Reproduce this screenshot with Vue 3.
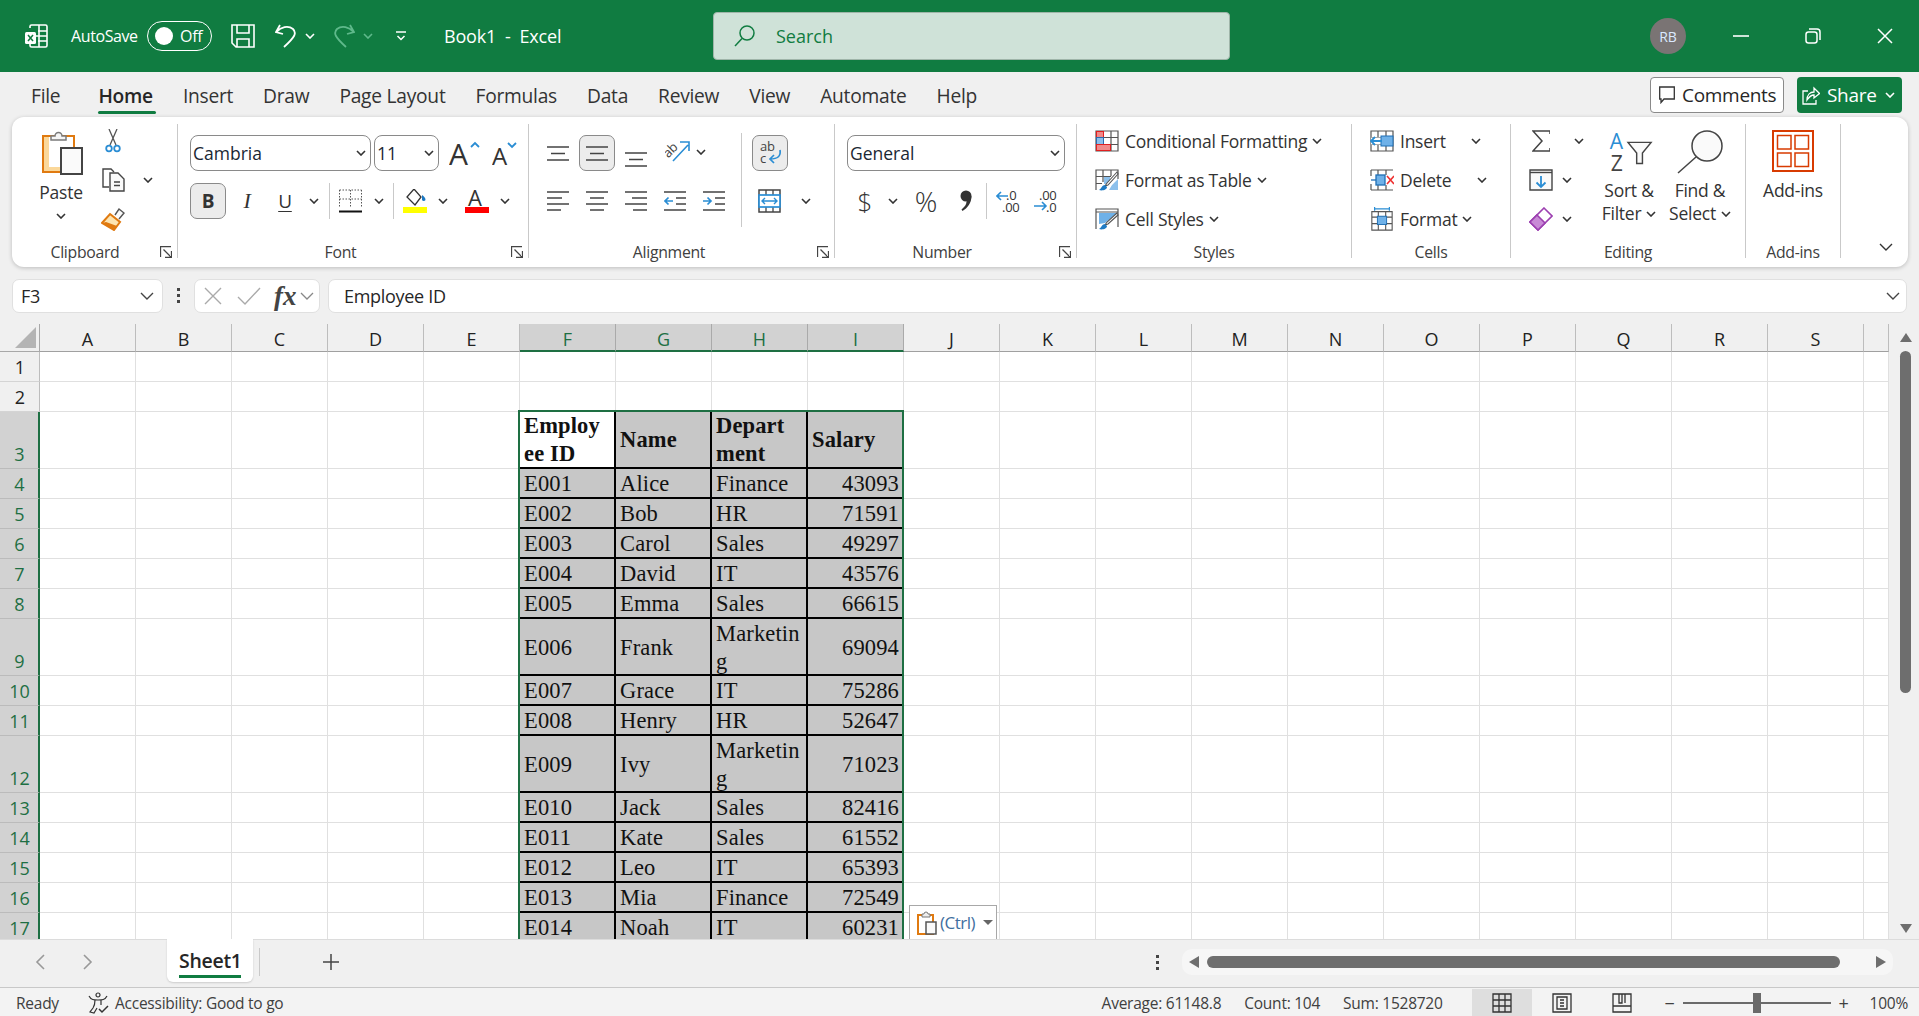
<template>
  <div class="app">
    <!-- shared small glyphs -->
    <svg class="sprite" aria-hidden="true">
      <symbol id="chev" viewBox="0 0 10 6"><path d="M1 1l4 4 4-4" fill="none" stroke="#333" stroke-width="1.6"/></symbol>
      <symbol id="launch" viewBox="0 0 12 12"><path d="M.5 11V.5H11M3.5 3.5l7.5 7.5M5 11.5h6.5V5" fill="none" stroke="#444" stroke-width="1.3"/></symbol>
    </svg>

    <header class="titlebar">
      <svg class="tb-logo" viewBox="0 0 24 24" fill="none" stroke="#fff" stroke-width="1.6">
        <path d="M6 4V2.5A1.5 1.5 0 0 1 7.5 1H21.5A1.5 1.5 0 0 1 23 2.5v19a1.5 1.5 0 0 1-1.5 1.5H7.5A1.5 1.5 0 0 1 6 21.5V20M15 1v22M12 12h11M14 7h9M14 17h9"/>
        <rect x="1" y="8" width="11" height="12" rx="1.5" fill="#fff" stroke="none"/>
        <path d="M4 11l5 6M9 11l-5 6" stroke="#107c41" stroke-width="1.5"/>
      </svg>
      <span class="autosave">AutoSave</span>
      <div class="toggle"><i class="knob"></i><span>Off</span></div>
      <svg class="tb-save" viewBox="0 0 24 24" fill="none" stroke="#fff" stroke-width="1.6">
        <path d="M1 1h22v22H5l-4-4zM6 1v8h12V1M6 23v-8h12v8"/>
      </svg>
      <svg class="tb-undo" viewBox="0 0 22 24" fill="none" stroke="#fff" stroke-width="1.8">
        <path d="M5 1L1 8l7 2M1.5 8C6 3 13 1 18 5c4 4 2 8-9 18"/>
      </svg>
      <svg class="chev tb-chev" viewBox="0 0 10 6"><path d="M1 1l4 4 4-4" fill="none" stroke="#fff" stroke-width="1.6"/></svg>
      <svg class="tb-redo" viewBox="0 0 22 24" fill="none" stroke="#5fb98b" stroke-width="1.8">
        <path d="M17 1l4 7-7 2M20.5 8C16 3 9 1 4 5c-4 4-2 8 9 18"/>
      </svg>
      <svg class="chev tb-chev" viewBox="0 0 10 6"><path d="M1 1l4 4 4-4" fill="none" stroke="#5fb98b" stroke-width="1.6"/></svg>
      <svg class="tb-qat" viewBox="0 0 10 10" fill="none" stroke="#fff" stroke-width="1.5"><path d="M0 1h10M1.5 5L5 8.5 8.5 5"/></svg>
      <div class="doc-title">Book1&nbsp; - &nbsp;Excel</div>
      <div class="search">
        <svg viewBox="0 0 21 22" fill="none" stroke="#107c41" stroke-width="1.5"><circle cx="13" cy="8" r="7"/><path d="M8 13.5L1 21"/></svg>
        <span>Search</span>
      </div>
      <div class="avatar">RB</div>
      <svg class="win win-min" viewBox="0 0 16 16" stroke="#fff" stroke-width="1.6"><path d="M0 8h16"/></svg>
      <svg class="win win-max" viewBox="0 0 16 16" fill="none" stroke="#fff" stroke-width="1.5"><rect x="1" y="4" width="11" height="11" rx="2.5"/><path d="M4 1h8a3 3 0 0 1 3 3v8"/></svg>
      <svg class="win win-close" viewBox="0 0 16 16" stroke="#fff" stroke-width="1.5"><path d="M1 1l14 14M15 1L1 15"/></svg>
    </header>

    <nav class="tabs">
      <span v-for="t in tabs" :key="t" class="tab" :class="{ active: t === 'Home', first: t === 'File' }">{{ t }}</span>
      <div class="tab-actions">
        <button class="btn-comments">
          <svg viewBox="0 0 16 18" fill="none" stroke="#333" stroke-width="1.3"><path d="M.7 1h14.6v12H5l-3 3.5V13H.7z"/></svg>
          Comments
        </button>
        <button class="btn-share">
          <svg viewBox="0 0 18 20" fill="none" stroke="#fff" stroke-width="1.3"><path d="M6 6H1v13h13v-4M5 15c0-5 3-8 7-8V3l5.5 5.5L12 13V10c-3 0-5 2-7 5z"/></svg>
          Share
          <svg class="chev" viewBox="0 0 10 6"><path d="M1 1l4 4 4-4" fill="none" stroke="#fff" stroke-width="1.6"/></svg>
        </button>
      </div>
    </nav>

    <section class="ribbon">
      <!-- Clipboard -->
      <div class="group g-clip">
        <div class="body clip-body">
          <div class="big paste">
            <svg class="ic-paste" viewBox="0 0 41 45">
              <rect x="1" y="6" width="31" height="36" fill="#fff" stroke="#e07a10" stroke-width="2"/>
              <path d="M2 7h5v30h25v4H2z" fill="#fbd89a"/>
              <path d="M9 10V6h4a3.5 3.5 0 0 1 7 0h4v4z" fill="#f5f5f5" stroke="#7a7a7a" stroke-width="1.5"/>
              <rect x="19" y="18" width="21" height="26" fill="#fafafa" stroke="#444" stroke-width="2"/>
            </svg>
            <span class="big-text">Paste</span>
            <svg class="chev"><use href="#chev"/></svg>
          </div>
          <div class="stack clip-stack">
            <div class="row">
              <svg class="ic24" viewBox="0 0 24 24" fill="none">
                <path d="M8 0l7 16M16 0L9 16" stroke="#555" stroke-width="1.3"/>
                <circle cx="8" cy="19.5" r="2.8" stroke="#2a8dd4" stroke-width="1.8"/>
                <circle cx="16" cy="19.5" r="2.8" stroke="#2a8dd4" stroke-width="1.8"/>
              </svg>
            </div>
            <div class="row">
              <svg class="ic24" viewBox="0 0 24 24" fill="none" stroke="#444" stroke-width="1.4">
                <path d="M8 19H2V1h8l3 3"/>
                <path d="M9 5h8l6 6v12H9z" fill="#fafafa"/>
                <path d="M13 14h6M13 17.5h6"/>
              </svg>
              <svg class="chev clip-chev"><use href="#chev"/></svg>
            </div>
            <div class="row">
              <svg class="ic24" viewBox="0 0 24 24" fill="none">
                <path d="M14 8l4-6 5 4-5 6" fill="#fafafa" stroke="#555" stroke-width="1.4"/>
                <path d="M9 7l10 8-6 8-12-7z" fill="#fde4b0" stroke="#e07a10" stroke-width="2"/>
                <path d="M5 15l11 4-3 4-12-7z" fill="#e07a10"/>
              </svg>
            </div>
          </div>
        </div>
        <div class="label p-19">Clipboard<svg class="launch"><use href="#launch"/></svg></div>
      </div>

      <!-- Font -->
      <div class="group g-font">
        <div class="body font-body">
          <div class="font-row">
            <div class="select sel-font">Cambria<svg class="chev"><use href="#chev"/></svg></div>
            <div class="select sel-size">11<svg class="chev"><use href="#chev"/></svg></div>
            <svg class="ic-grow" viewBox="0 0 36 28">
              <text x="0" y="26" class="svg-t" font-size="30" fill="#333">A</text>
              <path d="M22 8l4-4 4 4" fill="none" stroke="#2a8dd4" stroke-width="1.8"/>
            </svg>
            <svg class="ic-shrink" viewBox="0 0 36 28">
              <text x="0" y="26" class="svg-t" font-size="24" fill="#333">A</text>
              <path d="M16 4l4 4 4-4" fill="none" stroke="#2a8dd4" stroke-width="1.8"/>
            </svg>
          </div>
          <div class="font-row second">
            <div class="press btn-b">B</div>
            <span class="ic-i">I</span>
            <span class="ic-u">U</span>
            <svg class="chev c-u"><use href="#chev"/></svg>
            <i class="vsep s-1"></i>
            <svg class="ic-border" viewBox="0 0 23 24" fill="none" stroke="#555">
              <path d="M.5 1h22M.5 1v17M22.5 1v17M11.5 1v17M.5 10h22" stroke-dasharray="1.5 1.5"/>
              <path d="M0 22.5h23" stroke="#111" stroke-width="2"/>
            </svg>
            <svg class="chev c-b"><use href="#chev"/></svg>
            <i class="vsep s-2"></i>
            <svg class="ic-fill" viewBox="0 0 24 24">
              <path d="M11 0l7 8-6 8-8-8z" fill="#fff" stroke="#333" stroke-width="1.3"/>
              <path d="M19 6c2 1 3.5 3 3.5 5a2 2 0 0 1-3.5 0z" fill="#1a78c2"/>
              <path d="M0 18h24v6H0z" fill="#ffff00"/>
            </svg>
            <svg class="chev c-f"><use href="#chev"/></svg>
            <svg class="ic-color" viewBox="0 0 24 24">
              <text x="3" y="17" class="svg-t" font-size="22" fill="#333">A</text>
              <path d="M0 18h24v6H0z" fill="#ff0000"/>
            </svg>
            <svg class="chev c-c"><use href="#chev"/></svg>
          </div>
        </div>
        <div class="label p-25">Font<svg class="launch"><use href="#launch"/></svg></div>
      </div>

      <!-- Alignment -->
      <div class="group g-align">
        <div class="body align-body">
          <div class="align-grid">
            <div class="acell"><svg class="ic-line" viewBox="0 0 22 15" stroke="#444" stroke-width="1.5"><path d="M0 1h22M4 7.5h14M0 14h22"/></svg></div>
            <div class="acell press"><svg class="ic-line" viewBox="0 0 22 15" stroke="#444" stroke-width="1.5"><path d="M0 1h22M4 7.5h14M0 14h22"/></svg></div>
            <div class="acell"><svg class="ic-line low" viewBox="0 0 22 15" stroke="#444" stroke-width="1.5"><path d="M0 1h22M4 7.5h14M0 14h22"/></svg></div>
            <div class="acell orient">
              <svg class="ic-orient" viewBox="0 0 25 24">
                <text x="0" y="14" class="svg-t" font-size="13" fill="#444" transform="rotate(-45 6 12) translate(-2 2)">ab</text>
                <path d="M8 23L23 7M15 4h9v9" fill="none" stroke="#2a8dd4" stroke-width="1.6"/>
              </svg>
              <svg class="chev"><use href="#chev"/></svg>
            </div>
            <div class="acell"><svg class="ic-line" viewBox="0 0 22 20" stroke="#444" stroke-width="1.5"><path d="M0 1h22M0 7h15M0 13h22M0 19h14"/></svg></div>
            <div class="acell"><svg class="ic-line" viewBox="0 0 22 20" stroke="#444" stroke-width="1.5"><path d="M0 1h22M4 7h14M0 13h22M4 19h14"/></svg></div>
            <div class="acell"><svg class="ic-line" viewBox="0 0 22 20" stroke="#444" stroke-width="1.5"><path d="M0 1h22M7 7h15M0 13h22M8 19h14"/></svg></div>
            <div class="acell"><svg class="ic-line" viewBox="0 0 22 20" fill="none" stroke="#444" stroke-width="1.5"><path d="M0 1h22M12 7h10M12 13h10M0 19h22"/><path d="M9 10H1M4.5 6.5L1 10l3.5 3.5" stroke="#2a8dd4" stroke-width="1.7"/></svg></div>
            <div class="acell"><svg class="ic-line" viewBox="0 0 22 20" fill="none" stroke="#444" stroke-width="1.5"><path d="M0 1h22M12 7h10M12 13h10M0 19h22"/><path d="M0 10h8M4.5 6.5L8 10l-3.5 3.5" stroke="#2a8dd4" stroke-width="1.7"/></svg></div>
          </div>
          <div class="wrap-col">
            <div class="press btn-wrap">
              <svg viewBox="0 0 26 26">
                <text x="3" y="11" class="svg-t" font-size="13" fill="#444">ab</text>
                <text x="3" y="23" class="svg-t" font-size="13" fill="#444">c</text>
                <path d="M23 10c1 6-2 9-10 9M17 15l-4 4 4 4" fill="none" stroke="#2a8dd4" stroke-width="1.7"/>
              </svg>
            </div>
            <div class="merge">
              <svg class="ic-merge" viewBox="0 0 23 24" fill="none">
                <rect x="1" y="1" width="21" height="22" stroke="#444" stroke-width="1.5"/>
                <path d="M8 1v5M15 1v5M8 18v5M15 18v5" stroke="#444" stroke-width="1.3"/>
                <rect x="1" y="6" width="21" height="12" fill="#fff" stroke="#2a8dd4" stroke-width="1.7"/>
                <path d="M4 12h15M7 9l-3 3 3 3M16 9l3 3-3 3" stroke="#2a8dd4" stroke-width="1.4"/>
              </svg>
              <svg class="chev"><use href="#chev"/></svg>
            </div>
          </div>
        </div>
        <div class="label p-25">Alignment<svg class="launch"><use href="#launch"/></svg></div>
      </div>

      <!-- Number -->
      <div class="group g-num">
        <div class="body num-body">
          <div class="select sel-general">General<svg class="chev"><use href="#chev"/></svg></div>
          <div class="num-row">
            <span class="num-sym dollar">$</span>
            <svg class="chev"><use href="#chev"/></svg>
            <span class="num-sym pct">%</span>
            <svg class="ic-comma" viewBox="0 0 12 22"><circle cx="6" cy="6" r="5.5" fill="#333"/><path d="M11.5 6c0 7-4 12-9 15l-1-1.5c3-2.5 5-5 5-8z" fill="#333"/></svg>
            <i class="vsep"></i>
            <svg class="ic-dec" viewBox="0 0 25 24">
              <text x="10" y="11" class="svg-t" font-size="13" fill="#333">.0</text>
              <text x="6" y="23" class="svg-t" font-size="13" fill="#333">.00</text>
              <path d="M12 7H1M5 3L1 7l4 4" fill="none" stroke="#2a8dd4" stroke-width="1.6"/>
            </svg>
            <svg class="ic-dec" viewBox="0 0 25 24">
              <text x="5" y="11" class="svg-t" font-size="13" fill="#333">.00</text>
              <text x="12" y="23" class="svg-t" font-size="13" fill="#333">.0</text>
              <path d="M0 17h12M8 13l4 4-4 4" fill="none" stroke="#2a8dd4" stroke-width="1.6"/>
            </svg>
          </div>
        </div>
        <div class="label p-27">Number<svg class="launch"><use href="#launch"/></svg></div>
      </div>

      <!-- Styles -->
      <div class="group g-styles">
        <div class="body stack styles-stack">
          <div class="row">
            <svg class="ic24" viewBox="0 0 24 22" fill="none">
              <path d="M1 1h22v20H1zM8 1v20M16 1v20M1 7.5h22M1 14.5h22" stroke="#555" stroke-width="1.2"/>
              <rect x="1.5" y="1.5" width="7" height="6" fill="#f08a8a" stroke="#e02020"/>
              <rect x="1.5" y="7.5" width="7" height="7" fill="#8cc0ec" stroke="#2a6db0"/>
              <rect x="1.5" y="14.5" width="14" height="6" fill="#f08a8a" stroke="#e02020"/>
            </svg>
            <span>Conditional Formatting</span>
            <svg class="chev"><use href="#chev"/></svg>
          </div>
          <div class="row">
            <svg class="ic24" viewBox="0 0 24 22" fill="none">
              <path d="M1 21V1h22v9M8 1v12M16 1v6M1 7.5h15M1 14.5h6" stroke="#555" stroke-width="1.2"/>
              <path d="M9 8h6v7H9zM17 16l6-6v11h-9z" fill="#8cc0ec"/>
              <path d="M22 3L12 14l-2 3 3-1L23 5z" fill="#fff" stroke="#555" stroke-width="1.1"/>
              <path d="M10 16c-3 0-3 3-6 5 3 1 8 0 8-3z" fill="#1f7bc4"/>
            </svg>
            <span>Format as Table</span>
            <svg class="chev"><use href="#chev"/></svg>
          </div>
          <div class="row">
            <svg class="ic24" viewBox="0 0 24 22" fill="none">
              <path d="M1 21V1h22v18M1 4h22" stroke="#555" stroke-width="1.2"/>
              <path d="M4 5h18L10 15l-6 1z" fill="#6fb1e8"/>
              <path d="M22 5L12 14l-2 3 3-1L23 7z" fill="#fff" stroke="#555" stroke-width="1.1"/>
              <path d="M10 16c-3 0-3 3-6 5 3 1 8 0 8-3z" fill="#1f7bc4"/>
            </svg>
            <span>Cell Styles</span>
            <svg class="chev"><use href="#chev"/></svg>
          </div>
        </div>
        <div class="label">Styles</div>
      </div>

      <!-- Cells -->
      <div class="group g-cells">
        <div class="body stack cells-stack">
          <div class="row">
            <svg class="ic24" viewBox="0 0 24 22" fill="none">
              <path d="M1 1h22v20H1zM8 1v20M16 1v20M1 7.5h22M1 14.5h22" stroke="#555" stroke-width="1.2"/>
              <rect x="1" y="7.5" width="22" height="7" fill="#fff"/>
              <rect x="11" y="6" width="12" height="10" fill="#6fb1e8" stroke="#1f6fb5"/>
              <path d="M12 11H1M5 7l-4 4 4 4" stroke="#2a8dd4" stroke-width="1.8"/>
            </svg>
            <span class="w-insert">Insert</span>
            <svg class="chev"><use href="#chev"/></svg>
          </div>
          <div class="row">
            <svg class="ic24" viewBox="0 0 24 22" fill="none">
              <path d="M1 1h22M1 21h22M8 1v5M16 1v5M8 16v5M16 16v5M1 1v6M1 15v6" stroke="#555" stroke-width="1.2"/>
              <rect x="6" y="6" width="9" height="10" fill="#6fb1e8" stroke="#1f6fb5" stroke-width="1.3"/>
              <path d="M1 11h5" stroke="#1f6fb5" stroke-width="1.3"/>
              <path d="M17 7l7 8M24 7l-7 8" stroke="#ee3030" stroke-width="1.6"/>
            </svg>
            <span class="w-delete">Delete</span>
            <svg class="chev"><use href="#chev"/></svg>
          </div>
          <div class="row">
            <svg class="ic24" viewBox="0 0 24 26" fill="none">
              <path d="M1 5h22v20H1zM8 5v20M16 5v20M1 11h22M1 18h22" stroke="#555" stroke-width="1.2"/>
              <rect x="7" y="10" width="10" height="9" fill="#6fb1e8" stroke="#1f6fb5"/>
              <path d="M4 2h16M4 0v4M20 0v4" stroke="#2a8dd4" stroke-width="1.3"/>
            </svg>
            <span>Format</span>
            <svg class="chev"><use href="#chev"/></svg>
          </div>
        </div>
        <div class="label">Cells</div>
      </div>

      <!-- Editing -->
      <div class="group g-edit">
        <div class="body edit-body">
          <div class="stack edit-stack">
            <div class="row">
              <svg class="ic-sigma" viewBox="0 0 18 22" fill="none" stroke="#444" stroke-width="1.5"><path d="M18 4V1H1l9 10-9 10h17v-3"/></svg>
              <svg class="chev c-sigma"><use href="#chev"/></svg>
            </div>
            <div class="row">
              <svg class="ic24" viewBox="0 0 24 22" fill="none">
                <path d="M1 1h22v20H1z" fill="#fafafa" stroke="#444" stroke-width="1.4"/>
                <path d="M1 3.5h22" stroke="#444" stroke-width="1.4"/>
                <path d="M12 7v11M7.5 13.5L12 18l4.5-4.5" stroke="#2a8dd4" stroke-width="1.8"/>
              </svg>
              <svg class="chev"><use href="#chev"/></svg>
            </div>
            <div class="row">
              <svg class="ic24" viewBox="0 0 24 24" fill="none">
                <path d="M15 1l8 8-14 14-8-8z" fill="#fff" stroke="#9c3fb0" stroke-width="1.6"/>
                <path d="M8 8l8 8-7 7-8-8z" fill="#c88ad6" stroke="#9c3fb0" stroke-width="1.6"/>
              </svg>
              <svg class="chev"><use href="#chev"/></svg>
            </div>
          </div>
          <div class="big sort">
            <svg class="ic-big" viewBox="0 0 50 44">
              <text x="5" y="19" class="svg-t" font-size="22" fill="#2a8dd4">A</text>
              <text x="6" y="42" class="svg-t" font-size="22" fill="#444">Z</text>
              <path d="M24 12h24l-9 11v11h-6V23z" fill="#fafafa" stroke="#444" stroke-width="1.5"/>
            </svg>
            <span class="big-text">Sort &amp;</span>
            <span class="big-text">Filter<svg class="chev"><use href="#chev"/></svg></span>
          </div>
          <div class="big find">
            <svg class="ic-big" viewBox="0 0 46 44" fill="none">
              <circle cx="30" cy="16" r="15" fill="#fafafa" stroke="#444" stroke-width="1.5"/>
              <path d="M19 27L1 43" stroke="#444" stroke-width="1.5"/>
            </svg>
            <span class="big-text">Find &amp;</span>
            <span class="big-text">Select<svg class="chev"><use href="#chev"/></svg></span>
          </div>
        </div>
        <div class="label">Editing</div>
      </div>

      <!-- Add-ins -->
      <div class="group g-add">
        <div class="body add-body">
          <div class="big">
            <svg class="ic-add" viewBox="0 0 42 42" fill="none" stroke="#d83b01">
              <rect x="1" y="1" width="40" height="40" stroke-width="2"/>
              <rect x="5.5" y="5.5" width="13.5" height="13.5" stroke-width="1.5"/>
              <rect x="23" y="5.5" width="13.5" height="13.5" stroke-width="1.5"/>
              <rect x="5.5" y="23" width="13.5" height="13.5" stroke-width="1.5"/>
              <rect x="23" y="23" width="13.5" height="13.5" stroke-width="1.5"/>
            </svg>
            <span class="big-text">Add-ins</span>
          </div>
        </div>
        <div class="label">Add-ins</div>
      </div>

      <div class="collapse">
        <svg viewBox="0 0 14 8" fill="none" stroke="#333" stroke-width="1.4"><path d="M1 1l6 6 6-6"/></svg>
      </div>
    </section>

    <div class="formula">
      <div class="namebox">F3<svg viewBox="0 0 14 8" fill="none" stroke="#444" stroke-width="1.4"><path d="M1 1l6 6 6-6"/></svg></div>
      <svg class="grip" viewBox="0 0 4 16" fill="#444"><rect width="3" height="3"/><rect y="6" width="3" height="3"/><rect y="12" width="3" height="3"/></svg>
      <div class="fx-box">
        <svg class="fx-x" viewBox="0 0 18 18" stroke="#aaa" stroke-width="1.4"><path d="M1 1l16 16M17 1L1 17"/></svg>
        <svg class="fx-c" viewBox="0 0 24 18" fill="none" stroke="#aaa" stroke-width="1.4"><path d="M1 10l7 7L23 1"/></svg>
        <span class="fx">fx</span>
        <svg class="fx-d" viewBox="0 0 14 8" fill="none" stroke="#888" stroke-width="1.3"><path d="M1 1l6 6 6-6"/></svg>
      </div>
      <div class="fx-input">Employee ID<svg viewBox="0 0 14 8" fill="none" stroke="#444" stroke-width="1.4"><path d="M1 1l6 6 6-6"/></svg></div>
    </div>

    <div class="sheet-wrap">
      <div class="sheet" :style="{ gridTemplateRows: trackRows }">
        <div class="corner"><i></i></div>
        <div v-for="(c, i) in columns" :key="c" class="col-head" :class="{ sel: i >= 5 && i <= 8 }">{{ c }}</div>
        <template v-for="r in rows" :key="r.n">
          <div class="row-head" :class="{ sel: r.n >= 3 }">{{ r.n }}</div>
          <div v-for="(c, i) in columns" :key="c" class="cell" :class="cellClass(r, i)">{{ cellText(r, i) }}</div>
        </template>
        <div class="selection"></div>
        <div class="paste-tag">
          <svg viewBox="0 0 20 24">
            <rect x="1" y="4" width="15" height="19" fill="#fff" stroke="#e07a10" stroke-width="2"/>
            <path d="M5 6V3h2a2 2 0 0 1 4 0h2v3z" fill="#eee" stroke="#777"/>
            <rect x="9" y="11" width="10" height="12" fill="#fafafa" stroke="#555" stroke-width="1.5"/>
          </svg>
          <span>(Ctrl)</span>
          <i class="tag-arrow"></i>
        </div>
      </div>
      <div class="vscroll">
        <i class="arrow-up"></i>
        <div class="v-thumb"></div>
        <i class="arrow-down"></i>
      </div>
    </div>

    <div class="sheetbar">
      <svg class="nav nav-prev" viewBox="0 0 10 16" fill="none" stroke="#999" stroke-width="1.6"><path d="M9 1L2 8l7 7"/></svg>
      <svg class="nav nav-next" viewBox="0 0 10 16" fill="none" stroke="#999" stroke-width="1.6"><path d="M1 1l7 7-7 7"/></svg>
      <div class="sheet-tab"><span>Sheet1</span></div>
      <i class="tab-sep"></i>
      <svg class="plus" viewBox="0 0 16 16" stroke="#444" stroke-width="1.5"><path d="M8 0v16M0 8h16"/></svg>
      <svg class="grip bar-grip" viewBox="0 0 4 16" fill="#444"><rect width="3" height="3"/><rect y="6" width="3" height="3"/><rect y="12" width="3" height="3"/></svg>
      <div class="hscroll">
        <i class="arrow-left"></i>
        <div class="h-thumb"></div>
        <i class="arrow-right"></i>
      </div>
    </div>

    <footer class="status">
      <span class="ready">Ready</span>
      <svg class="acc" viewBox="0 0 22 22" fill="none" stroke="#333" stroke-width="1.2">
        <circle cx="10" cy="3" r="2"/>
        <path d="M1 4c2 4 5 4 9 4s7 0 9-4M7 8c0 4 0 5-2 8l-3 4 4 1 3-5M13 8v5"/>
        <path d="M11 17l3 3 6-6" stroke-width="1.5"/>
      </svg>
      <span>Accessibility: Good to go</span>
      <div class="stats">
        <span>Average: 61148.8</span>
        <span>Count: 104</span>
        <span>Sum: 1528720</span>
      </div>
      <div class="view-btn on">
        <svg viewBox="0 0 20 20" fill="none" stroke="#333" stroke-width="1.3"><path d="M1 1h18v18H1zM7 1v18M13 1v18M1 7h18M1 13h18"/></svg>
      </div>
      <div class="view-btn">
        <svg viewBox="0 0 20 20" fill="none" stroke="#333" stroke-width="1.3"><path d="M1 1h18v18H1z"/><path d="M5 4h10v12H5zM8 7h4M8 10h4M8 13h4"/></svg>
      </div>
      <div class="view-btn">
        <svg viewBox="0 0 20 20" fill="none" stroke="#333" stroke-width="1.3"><path d="M1 1h18v18H1zM1 13h18M7 1v9h3V1M13 1v9"/></svg>
      </div>
      <span class="zoom-sign minus">−</span>
      <div class="slider"><i></i></div>
      <span class="zoom-sign">+</span>
      <span class="zoom-val">100%</span>
    </footer>
  </div>
</template>

<script setup>
const tabs = ['File', 'Home', 'Insert', 'Draw', 'Page Layout', 'Formulas', 'Data', 'Review', 'View', 'Automate', 'Help']

const columns = ['A', 'B', 'C', 'D', 'E', 'F', 'G', 'H', 'I', 'J', 'K', 'L', 'M', 'N', 'O', 'P', 'Q', 'R', 'S', '']

const table = {
  3: ['Employ\nee ID', 'Name', 'Depart\nment', 'Salary'],
  4: ['E001', 'Alice', 'Finance', 43093],
  5: ['E002', 'Bob', 'HR', 71591],
  6: ['E003', 'Carol', 'Sales', 49297],
  7: ['E004', 'David', 'IT', 43576],
  8: ['E005', 'Emma', 'Sales', 66615],
  9: ['E006', 'Frank', 'Marketin\ng', 69094],
  10: ['E007', 'Grace', 'IT', 75286],
  11: ['E008', 'Henry', 'HR', 52647],
  12: ['E009', 'Ivy', 'Marketin\ng', 71023],
  13: ['E010', 'Jack', 'Sales', 82416],
  14: ['E011', 'Kate', 'Sales', 61552],
  15: ['E012', 'Leo', 'IT', 65393],
  16: ['E013', 'Mia', 'Finance', 72549],
  17: ['E014', 'Noah', 'IT', 60231],
}

const tallRows = [3, 9, 12]
const rows = Array.from({ length: 17 }, (_, i) => ({ n: i + 1, h: tallRows.includes(i + 1) ? 57 : 30 }))
const trackRows = ['28px', ...rows.map(r => r.h + 'px')].join(' ')

function cellText(r, i) {
  if (i < 5 || i > 8 || !table[r.n]) return ''
  return table[r.n][i - 5]
}

function cellClass(r, i) {
  if (i < 5 || i > 8 || !table[r.n]) return ''
  return {
    filled: true,
    active: r.n === 3 && i === 5,
    bold: r.n === 3,
    num: r.n > 3 && i === 8,
  }
}
</script>

<style>
html, body { margin: 0; overflow: hidden; background: #f0f0f0; }
</style>

<style scoped>
.app {
  width: 1919px; height: 1016px;
  display: flex; flex-direction: column;
  background: #f0f0f0;
  font-family: "Open Sans", "Noto Sans", sans-serif;
  color: #262626;
  overflow: hidden;
}
.sprite { position: absolute; width: 0; height: 0; }
.chev { width: 10px; height: 6px; flex-shrink: 0; }
svg { display: block; flex-shrink: 0; }
i { display: block; }

/* title bar */
.titlebar {
  height: 72px; flex-shrink: 0;
  background: #107c41; color: #fff;
  display: flex; align-items: center;
  padding-left: 24px;
}
.tb-logo { width: 24px; height: 24px; }
.autosave { margin-left: 23px; width: 76px; font-size: 16px; letter-spacing: -0.4px; }
.toggle {
  width: 65px; height: 30px; box-sizing: border-box;
  border: 1.5px solid #fff; border-radius: 15px;
  display: flex; align-items: center; gap: 7px;
  padding-left: 7px; font-size: 16px; letter-spacing: -0.3px;
}
.knob { width: 18px; height: 18px; background: #fff; border-radius: 50%; }
.tb-save { width: 24px; height: 24px; margin-left: 19px; }
.tb-undo, .tb-redo { width: 22px; height: 24px; }
.tb-undo { margin-left: 20px; }
.tb-chev { margin-left: 8px; }
.tb-redo { margin-left: 18px; }
.tb-qat { width: 10px; height: 10px; margin-left: 23px; }
.doc-title { margin-left: 38px; width: 269px; font-size: 18px; letter-spacing: -0.2px; white-space: nowrap; }
.search {
  width: 517px; height: 48px; box-sizing: border-box;
  background: #cfe2d8; border: 1px solid #9fb5a9; border-radius: 4px;
  display: flex; align-items: center; gap: 21px;
  padding-left: 20px;
  color: #107c41; font-size: 18px;
}
.search svg { width: 21px; height: 22px; }
.avatar {
  margin-left: auto;
  width: 36px; height: 36px; border-radius: 50%;
  background: #7a7474; color: #dbe9ff; font-size: 14px;
  display: flex; align-items: center; justify-content: center;
}
.win { width: 16px; height: 16px; }
.win-min { margin-left: 47px; }
.win-max { margin-left: 56px; }
.win-close { margin-left: 56px; margin-right: 26px; }

/* tabs */
.tabs {
  height: 45px; flex-shrink: 0;
  display: flex; align-items: center;
  padding-left: 31px; gap: 30px;
  font-size: 19.2px; color: #333;
  letter-spacing: -0.25px;
}
.tab { position: relative; white-space: nowrap; margin-top: 3px; padding-bottom: 2px; }
.tab.first { margin-right: 8px; }
.tab.active { font-weight: 600; color: #262626; }
.tab.active::after {
  content: ""; position: absolute; left: 0; right: -3px; bottom: -3px;
  height: 3px; border-radius: 2px; background: #107c41;
}
.tab-actions { margin-left: auto; display: flex; gap: 13px; padding-right: 17px; }
.tab-actions button {
  height: 36px; box-sizing: border-box; border-radius: 4px;
  display: flex; align-items: center;
  font: inherit; font-size: 19px; letter-spacing: -0.3px;
  padding: 0;
}
.btn-comments { width: 134px; background: #fff; border: 1px solid #8a8a8a; color: #262626; padding-left: 8px !important; gap: 7px; }
.btn-comments svg { width: 16px; height: 18px; }
.btn-share { width: 105px; background: #107c41; border: none; color: #fff; padding-left: 5px !important; gap: 7px; }
.btn-share svg:first-child { width: 18px; height: 20px; }
.btn-share .chev { margin-left: 1px; }

/* ribbon */
.ribbon {
  margin-left: 12px; margin-right: 11px;
  height: 150px; flex-shrink: 0; box-sizing: border-box;
  padding-top: 7px; padding-bottom: 9px;
  background: #fff; border-radius: 12px;
  box-shadow: 0 1px 4px rgba(0,0,0,0.22);
  display: flex;
  font-size: 17.5px; letter-spacing: -0.25px; color: #333;
}
.group {
  display: flex; flex-direction: column;
  box-sizing: border-box;
  border-right: 1px solid #c9c9c9;
  flex-shrink: 0;
}
.body { flex: 1; min-height: 0; }
.label {
  position: relative;
  height: 18px; line-height: 18px; margin-bottom: -3px;
  text-align: center; font-size: 15.8px; color: #404040; letter-spacing: -0.3px;
}
.p-19 { padding-right: 19px; }
.p-25 { padding-right: 25px; }
.p-27 { padding-right: 27px; }
.launch { position: absolute; right: 5px; top: 3px; width: 12px; height: 12px; }

.g-clip { width: 166px; }
.g-font { width: 351px; }
.g-align { width: 306px; }
.g-num { width: 242px; }
.g-styles { width: 275px; }
.g-cells { width: 159px; }
.g-edit { width: 235px; }
.g-add { width: 95px; }

.stack {
  display: grid;
  grid-auto-rows: 24px; row-gap: 15px;
  padding-top: 5px;
}
.row { display: flex; align-items: center; gap: 6px; white-space: nowrap; }
.ic24 { width: 24px; height: 24px; }
.big { display: flex; flex-direction: column; align-items: center; padding-top: 6px; }
.big-text { display: flex; align-items: center; gap: 5px; line-height: 23px; }

.select {
  height: 36px; box-sizing: border-box;
  border: 1px solid #8a8a8a; border-radius: 8px;
  display: flex; align-items: center; justify-content: space-between;
  padding: 0 4px 0 2px; background: #fff;
  color: #1a2733; letter-spacing: 0;
}
.press {
  box-sizing: border-box; background: #ececec;
  border: 1px solid #8a8a8a; border-radius: 7px;
}
.svg-t { font-family: "Open Sans", sans-serif; }
.vsep { width: 1px; background: #c9c9c9; }

/* clipboard */
.clip-body { display: flex; padding-left: 19px; }
.paste { width: 60px; }
.ic-paste { width: 41px; height: 45px; margin-left: 3px; }
.paste .big-text { margin-top: 6px; margin-bottom: 9px; }
.clip-stack { margin-left: 10px; }
.clip-chev { margin-left: 12px; }

/* font */
.font-body { padding: 11px 0 0 12px; }
.font-row { display: flex; align-items: center; }
.font-row.second { margin-top: 12px; height: 36px; }
.sel-font { width: 181px; }
.sel-size { width: 65px; margin-left: 3px; }
.ic-grow { width: 36px; height: 28px; margin-left: 10px; }
.ic-shrink { width: 36px; height: 28px; margin-left: 7px; }
.btn-b {
  width: 36px; height: 36px;
  display: flex; align-items: center; justify-content: center;
  font-weight: 700; font-size: 19px; color: #333;
}
.ic-i { width: 14px; margin-left: 14px; font: italic 22px "Liberation Serif", serif; color: #333; text-align: center; }
.ic-u { width: 16px; margin-left: 23px; font-size: 19px; text-decoration: underline; text-underline-offset: 3px; text-align: center; }
.c-u { margin-left: 16px; }
.s-1, .s-2 { height: 36px; }
.s-1 { margin-left: 10px; }
.ic-border { width: 23px; height: 24px; margin-left: 9px; }
.c-b { margin-left: 12px; }
.s-2 { margin-left: 9px; }
.ic-fill { width: 24px; height: 24px; margin-left: 9px; }
.c-f { margin-left: 11px; }
.ic-color { width: 24px; height: 24px; margin-left: 17px; }
.c-c { margin-left: 11px; }

/* alignment */
.align-body { display: flex; padding-left: 10px; }
.align-grid {
  width: 203px; height: 94px; margin-top: 9px; box-sizing: border-box;
  padding-top: 2px;
  border-right: 1px solid #c9c9c9;
  display: grid;
  grid-template-columns: repeat(5, 39px);
  grid-auto-rows: 36px; row-gap: 12px;
}
.acell { width: 36px; height: 36px; margin-left: 1px; display: flex; align-items: center; justify-content: center; }
.ic-line { width: 22px; height: 15px; }
.align-grid .acell:nth-child(n+5) .ic-line { height: 20px; }
.ic-line.low { margin-top: 13px; }
.orient { gap: 6px; width: 64px; justify-content: flex-start; padding-left: 8px; box-sizing: border-box; grid-column: span 2; margin-top: -3px; }
.orient .chev { margin-top: 3px; }
.ic-orient { width: 25px; height: 24px; }
.wrap-col { margin-left: 10px; padding-top: 11px; }
.btn-wrap { width: 36px; height: 36px; display: flex; align-items: center; justify-content: center; }
.btn-wrap svg { width: 26px; height: 26px; }
.merge { display: flex; align-items: center; margin-top: 18px; padding-left: 6px; gap: 20px; }
.ic-merge { width: 23px; height: 24px; }

/* number */
.num-body { padding: 11px 0 0 12px; }
.sel-general { width: 218px; }
.num-row {
  margin-top: 12px; height: 36px;
  display: grid; align-items: center; justify-items: center;
  grid-template-columns: 36px 20px 46px 34px 6px 38px 38px;
  width: 218px;
}
.num-sym { line-height: 36px; color: #333; letter-spacing: 0; }
.dollar { font-size: 26px; font-weight: 300; }
.pct { font-size: 28px; font-weight: 300; }
.ic-comma { width: 12px; height: 22px; }
.num-row .vsep { height: 36px; }
.ic-dec { width: 25px; height: 24px; }

/* styles, cells */
.styles-stack { padding-left: 18px; }
.cells-stack { padding-left: 18px; }
.styles-stack .chev, .cells-stack .chev { margin-left: -1px; }
.w-insert { width: 66px; }
.w-delete { width: 72px; }

/* editing */
.edit-body { display: flex; padding-left: 18px; }
.edit-stack { width: 69px; }
.ic-sigma { width: 18px; height: 22px; margin-left: 3px; }
.edit-stack .chev { margin-left: 3px; }
.edit-stack .c-sigma { margin-left: 18px; }
.sort { width: 62px; }
.find { width: 70px; margin-left: 5px; }
.ic-big { width: 48px; height: 44px; margin-bottom: 5px; }

/* add-ins */
.add-body { display: flex; justify-content: center; }
.ic-add { width: 42px; height: 42px; margin-bottom: 7px; }

.collapse { flex: 1; display: flex; align-items: flex-end; padding-bottom: 7px; }
.collapse svg { width: 14px; height: 8px; margin-left: 38px; }

/* formula bar */
.formula {
  height: 34px; margin-top: 12px; flex-shrink: 0;
  display: flex; align-items: stretch;
  padding-left: 12px; padding-right: 12px;
  font-size: 18px; color: #262626; letter-spacing: -0.3px;
}
.namebox, .fx-box, .fx-input {
  box-sizing: border-box;
  background: #fff; border: 1px solid #e0e0e0; border-radius: 7px;
  display: flex; align-items: center;
}
.namebox { width: 151px; padding: 0 8px; justify-content: space-between; }
.namebox svg { width: 14px; height: 8px; }
.grip { width: 4px; height: 16px; align-self: center; }
.formula .grip { margin-left: 14px; }
.fx-box { width: 126px; margin-left: 13px; }
.fx-x { width: 18px; height: 18px; margin-left: 9px; }
.fx-c { width: 24px; height: 18px; margin-left: 15px; }
.fx { margin-left: 13px; width: 24px; font: italic 700 27px "Liberation Serif", serif; color: #444; letter-spacing: 0; }
.fx-d { width: 14px; height: 8px; margin-left: 2px; }
.fx-input { flex: 1; margin-left: 8px; padding: 0 6px 0 15px; justify-content: space-between; }
.fx-input svg { width: 14px; height: 8px; }

/* sheet */
.sheet-wrap { margin-top: 11px; height: 615px; flex-shrink: 0; display: flex; background: #fff; }
.sheet {
  position: relative;
  width: 1889px; height: 615px; overflow: hidden;
  display: grid;
  grid-template-columns: 40px repeat(19, 96px) 25px;
  background: #fff;
}
.corner { background: #f0f0f0; border-right: 1px solid #a8a8a8; border-bottom: 1px solid #a8a8a8; position: relative; }
.corner i {
  position: absolute; right: 3px; bottom: 3px;
  width: 0; height: 0;
  border-left: 21px solid transparent;
  border-bottom: 21px solid #b4b4b4;
}
.col-head {
  box-sizing: border-box;
  background: #f0f0f0;
  border-right: 1px solid #bdbdbd; border-bottom: 1px solid #a0a0a0;
  display: flex; align-items: center; justify-content: center;
  padding-top: 3px;
  font-size: 18px; color: #222;
}
.col-head.sel { background: #d2d2d2; color: #1e6f43; border-bottom: 2px solid #1e6f43; border-right-color: #aaa; }
.row-head {
  box-sizing: border-box;
  background: #f0f0f0;
  border-right: 1px solid #bdbdbd; border-bottom: 1px solid #d4d4d4;
  display: flex; align-items: flex-end; justify-content: center;
  padding-left: 1px;
  font-size: 18px; color: #222; line-height: 28px;
}
.row-head.sel { background: #d2d2d2; color: #1e6f43; border-right: 2px solid #1e6f43; border-bottom-color: #bbb; }
.cell {
  box-sizing: border-box;
  border-right: 1px solid #e0e0e0; border-bottom: 1px solid #e0e0e0;
  display: flex; align-items: center;
  white-space: pre-line;
  min-width: 0;
}
.cell.filled {
  background: #c7c7c7;
  border-right: 2px solid #000; border-bottom: 2px solid #000;
  padding: 2px 3px 0 4px;
  font-family: "Liberation Serif", serif; font-size: 22.5px; line-height: 28px; color: #111;
  letter-spacing: 0.15px;
}
.cell.active { background: #fff; }
.cell.bold { font-weight: 700; padding-top: 1px; }
.cell.num { justify-content: flex-end; }
.selection {
  position: absolute;
  grid-column: 7 / 11; grid-row: 4 / 19;
  top: -2px; left: -2px; right: 0; bottom: 0;
  border: 2px solid #1e6f43;
  z-index: 2; pointer-events: none;
}
.paste-tag {
  position: absolute; left: 909px; top: 581px;
  width: 88px; height: 34px; box-sizing: border-box;
  background: #fff; border: 1px solid #a8a8a8; border-bottom: none;
  display: flex; align-items: center; padding-left: 7px; gap: 3px;
  font-size: 17px; color: #3f6f9f; letter-spacing: -0.5px; z-index: 3;
}
.paste-tag svg { width: 20px; height: 24px; }
.tag-arrow { margin-left: 5px; border-left: 5px solid transparent; border-right: 5px solid transparent; border-top: 5px solid #666; }
.vscroll {
  width: 30px; background: #f0f0f0;
  display: flex; flex-direction: column; align-items: center;
  box-sizing: border-box; padding: 9px 0 6px 3px;
}
.v-thumb { width: 11px; height: 342px; margin-top: 9px; background: #6e6e6e; border-radius: 6px; }
.arrow-up { border-left: 6px solid transparent; border-right: 6px solid transparent; border-bottom: 9px solid #6e6e6e; }
.arrow-down { margin-top: auto; border-left: 6px solid transparent; border-right: 6px solid transparent; border-top: 9px solid #6e6e6e; }

/* sheet tabs */
.sheetbar {
  height: 48px; flex-shrink: 0; box-sizing: border-box;
  display: flex; align-items: center;
  background: #f0f0f0;
  border-top: 1px solid #dcdcdc;
  padding-left: 35px; padding-bottom: 3px;
}
.nav { width: 10px; height: 16px; }
.nav-next { margin-left: 38px; }
.sheet-tab {
  margin-left: 74px; width: 86px; height: 43px; align-self: flex-start;
  box-sizing: border-box; margin-top: -1px;
  background: #fff; border-radius: 0 0 6px 6px;
  box-shadow: 0 1px 2px rgba(0,0,0,0.15);
  display: flex; justify-content: center;
}
.sheet-tab span {
  box-sizing: border-box;
  height: 39px; width: 62px; padding-top: 5px; line-height: 33px; text-align: center;
  border-bottom: 3px solid #107c41;
  font-size: 19.5px; font-weight: 600; letter-spacing: -0.3px; color: #262626;
}
.tab-sep { width: 1px; height: 28px; background: #c9c9c9; margin-left: 6px; }
.plus { width: 16px; height: 16px; margin-left: 63px; }
.bar-grip { margin-left: 817px; margin-top: 1px; }
.hscroll {
  width: 711px; height: 26px; margin-left: 22px; box-sizing: border-box;
  background: #f6f6f6; border-radius: 10px;
  display: flex; align-items: center; padding: 0 7px;
}
.h-thumb { width: 633px; height: 12px; margin-left: 8px; background: #6e6e6e; border-radius: 6px; }
.arrow-left { border-top: 6px solid transparent; border-bottom: 6px solid transparent; border-right: 10px solid #6e6e6e; }
.arrow-right { margin-left: auto; border-top: 6px solid transparent; border-bottom: 6px solid transparent; border-left: 10px solid #6e6e6e; }

/* status bar */
.status {
  flex: 1; box-sizing: border-box;
  background: #f3f3f3; border-top: 1px solid #c8c8c8;
  display: flex; align-items: center;
  padding-left: 16px; padding-top: 1px;
  font-size: 15.5px; color: #404040; letter-spacing: -0.25px;
}
.ready { width: 72px; }
.acc { width: 22px; height: 22px; margin-right: 5px; }
.stats { margin-left: auto; display: flex; gap: 23px; margin-right: 29px; }
.view-btn { width: 60px; height: 28px; display: flex; align-items: center; justify-content: center; }
.view-btn.on { background: #dedede; }
.view-btn svg { width: 20px; height: 20px; }
.zoom-sign { width: 10px; margin-left: 8px; text-align: center; font-size: 18px; }
.zoom-sign.minus { margin-left: 13px; }
.slider { position: relative; width: 148px; height: 2px; margin-left: 8px; background: #6a6a6a; }
.slider i { position: absolute; left: 70px; top: -9px; width: 8px; height: 20px; background: #6a6a6a; }
.zoom-val { margin-left: 21px; margin-right: 11px; }
</style>
